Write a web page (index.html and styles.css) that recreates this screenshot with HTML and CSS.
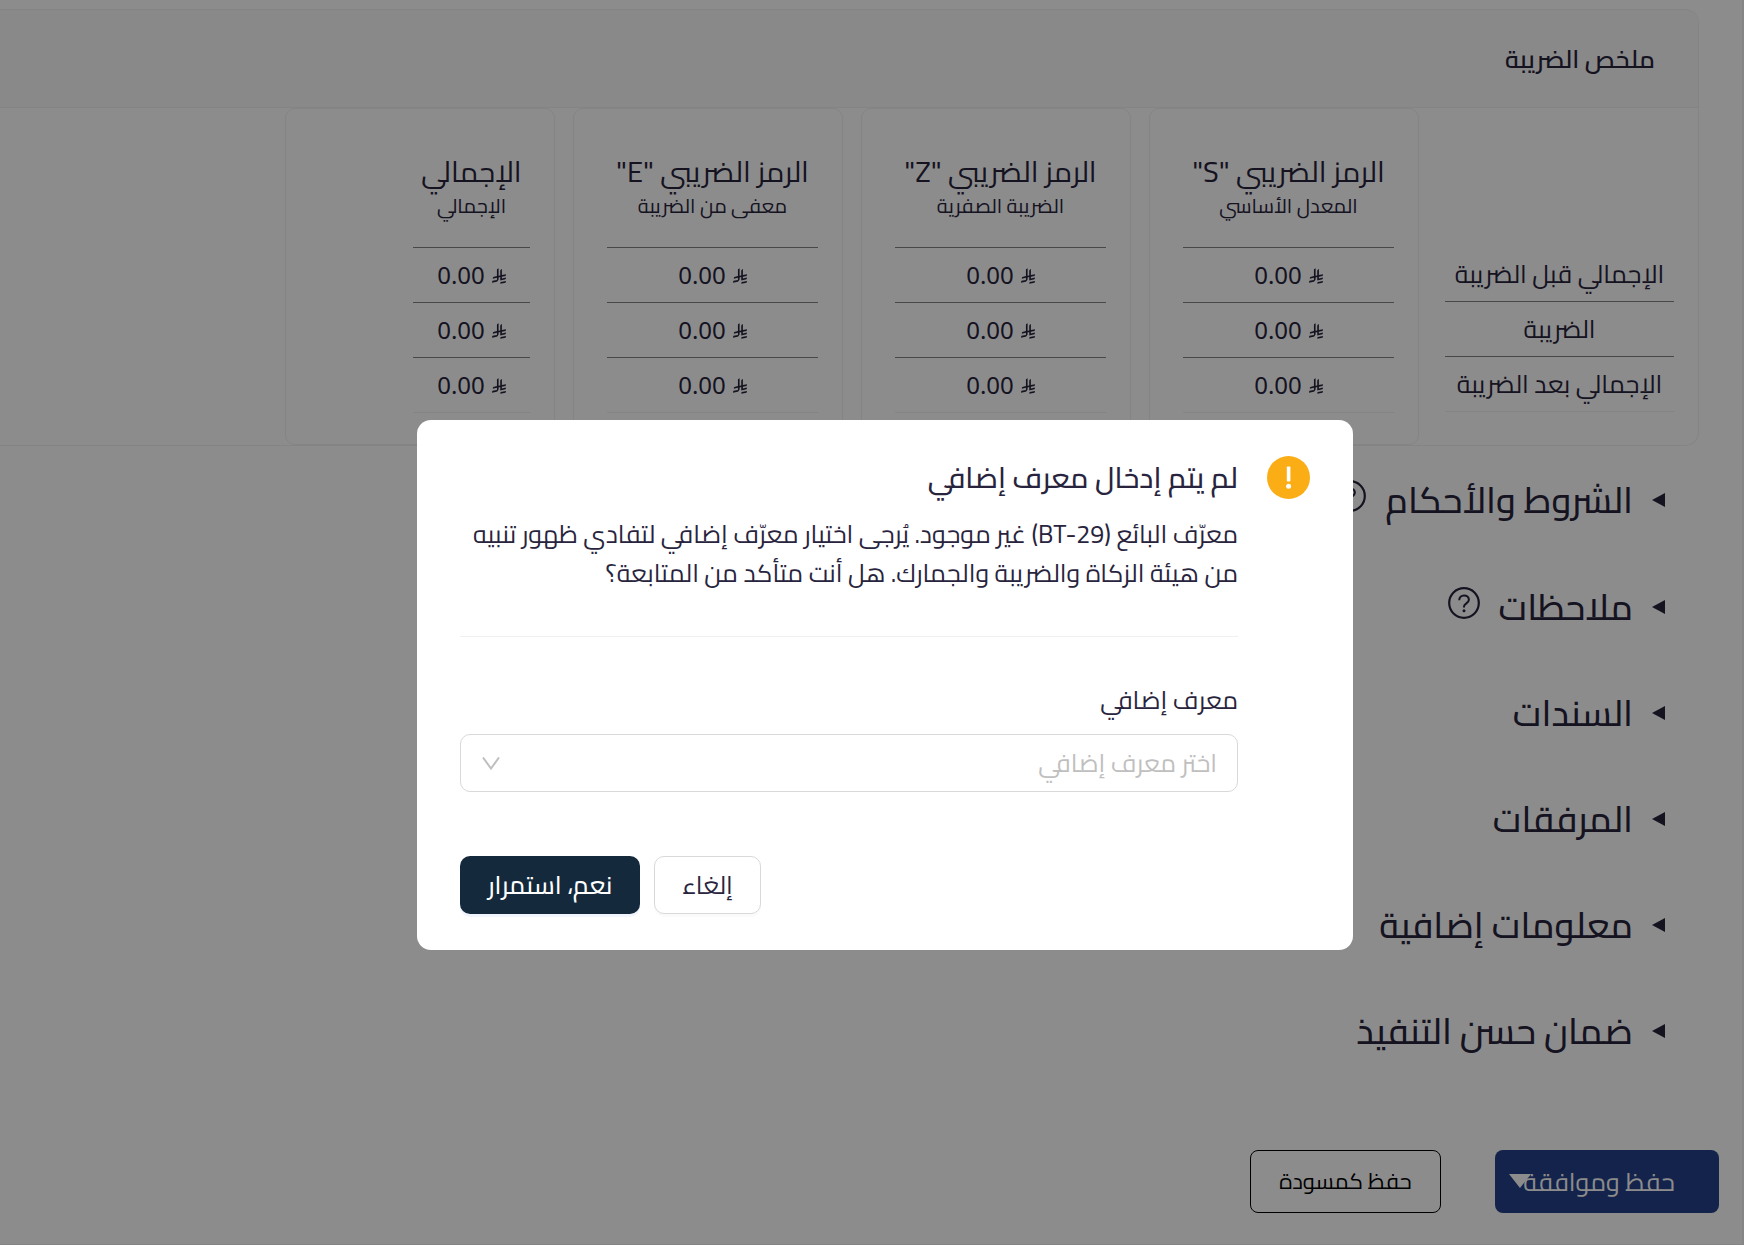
FILE: index.html
```html
<!DOCTYPE html>
<html lang="ar" dir="rtl">
<head>
<meta charset="utf-8">
<title>ملخص الضريبة</title>
<link rel="stylesheet" href="styles.css">
</head>
<body>
<svg class="sprite" aria-hidden="true">
  <symbol id="riyal" viewBox="0 0 1124 1256">
    <path d="M699.62 1113.02c-20.06 44.48-33.32 92.75-38.4 143.37l424.51-90.24c20.06-44.47 33.31-92.75 38.4-143.37l-424.51 90.24Z"/>
    <path d="M1085.73 895.8c20.06-44.47 33.32-92.75 38.4-143.37l-330.68 70.33v-135.2l292.27-62.11c20.06-44.47 33.32-92.75 38.4-143.37l-330.68 70.27V66.13c-50.67 28.45-95.67 66.32-132.25 110.99v403.35l-132.25 28.11V0c-50.67 28.44-95.67 66.32-132.25 110.99v525.69l-295.91 62.88c-20.06 44.47-33.33 92.75-38.42 143.37l334.33-71.05v170.26l-358.3 76.14c-20.06 44.47-33.32 92.75-38.4 143.37l375.04-79.7c30.53-6.35 56.77-24.4 73.83-49.24l68.78-101.97c7.14-10.55 11.3-23.27 11.3-36.97v-149.98l132.25-28.11v270.4l424.53-90.28Z"/>
  </symbol>
  <symbol id="help" viewBox="0 0 32 32">
    <circle cx="16" cy="16" r="14.8" fill="none" stroke="currentColor" stroke-width="2.2"/>
    <path d="M11.2 13.2c0-3 2.1-4.8 4.8-4.8s4.9 1.8 4.9 4.4c0 3.6-4.9 3.5-4.9 6.8v.8" fill="none" stroke="currentColor" stroke-width="2"/>
    <circle cx="16" cy="23.8" r="1.5"/>
  </symbol>
</svg>

<main class="page">
  <section class="panel">
    <h2 class="panel-title">ملخص الضريبة</h2>
    <div class="columns">
      <div class="column labels">
        <table class="rows">
          <tbody>
            <tr><th scope="row">الإجمالي قبل الضريبة</th></tr>
            <tr><th scope="row">الضريبة</th></tr>
            <tr><th scope="row">الإجمالي بعد الضريبة</th></tr>
          </tbody>
        </table>
      </div>
      <div class="column card">
        <table class="rows">
          <thead><tr><th scope="col"><span class="code">الرمز الضريبي "S"</span><span class="note">المعدل الأساسي</span></th></tr></thead>
          <tbody>
            <tr><td><svg class="riyal"><use href="#riyal"/></svg>0.00</td></tr>
            <tr><td><svg class="riyal"><use href="#riyal"/></svg>0.00</td></tr>
            <tr><td><svg class="riyal"><use href="#riyal"/></svg>0.00</td></tr>
          </tbody>
        </table>
      </div>
      <div class="column card">
        <table class="rows">
          <thead><tr><th scope="col"><span class="code">الرمز الضريبي "Z"</span><span class="note">الضريبة الصفرية</span></th></tr></thead>
          <tbody>
            <tr><td><svg class="riyal"><use href="#riyal"/></svg>0.00</td></tr>
            <tr><td><svg class="riyal"><use href="#riyal"/></svg>0.00</td></tr>
            <tr><td><svg class="riyal"><use href="#riyal"/></svg>0.00</td></tr>
          </tbody>
        </table>
      </div>
      <div class="column card">
        <table class="rows">
          <thead><tr><th scope="col"><span class="code">الرمز الضريبي "E"</span><span class="note">معفى من الضريبة</span></th></tr></thead>
          <tbody>
            <tr><td><svg class="riyal"><use href="#riyal"/></svg>0.00</td></tr>
            <tr><td><svg class="riyal"><use href="#riyal"/></svg>0.00</td></tr>
            <tr><td><svg class="riyal"><use href="#riyal"/></svg>0.00</td></tr>
          </tbody>
        </table>
      </div>
      <div class="column card total">
        <table class="rows">
          <thead><tr><th scope="col"><span class="code">الإجمالي</span><span class="note">الإجمالي</span></th></tr></thead>
          <tbody>
            <tr><td><svg class="riyal"><use href="#riyal"/></svg>0.00</td></tr>
            <tr><td><svg class="riyal"><use href="#riyal"/></svg>0.00</td></tr>
            <tr><td><svg class="riyal"><use href="#riyal"/></svg>0.00</td></tr>
          </tbody>
        </table>
      </div>
    </div>
  </section>

  <div class="sections">
    <details><summary class="with-help"><i class="marker"></i>الشروط والأحكام<svg class="help"><use href="#help"/></svg></summary></details>
    <details><summary class="with-help"><i class="marker"></i>ملاحظات<svg class="help"><use href="#help"/></svg></summary></details>
    <details><summary><i class="marker"></i>السندات</summary></details>
    <details><summary><i class="marker"></i>المرفقات</summary></details>
    <details><summary><i class="marker"></i>معلومات إضافية</summary></details>
    <details><summary><i class="marker"></i>ضمان حسن التنفيذ</summary></details>
  </div>

  <div class="actions">
    <button class="save" type="button"><i class="caret"></i><span>حفظ وموافقة</span></button>
    <button class="draft" type="button">حفظ كمسودة</button>
  </div>
</main>

<div class="overlay">
  <div class="modal" role="dialog" aria-modal="true" aria-labelledby="modal-title">
    <svg class="warning" viewBox="0 0 43 43" aria-hidden="true">
      <circle cx="21.5" cy="21.5" r="21.5" fill="#faad14"/>
      <rect x="19.8" y="10.5" width="3.6" height="15" rx=".8" fill="#fff"/>
      <circle cx="21.6" cy="30.2" r="2.5" fill="#fff"/>
    </svg>
    <div class="modal-body">
      <h3 class="modal-title" id="modal-title">لم يتم إدخال معرف إضافي</h3>
      <p class="modal-text">معرّف البائع (BT-29) غير موجود. يُرجى اختيار معرّف إضافي لتفادي ظهور تنبيه<br>من هيئة الزكاة والضريبة والجمارك. هل أنت متأكد من المتابعة؟</p>
      <hr class="divider">
      <label class="field-label" for="extra-id">معرف إضافي</label>
      <div class="select-box">
        <select id="extra-id"><option>اختر معرف إضافي</option></select>
        <svg class="chevron" viewBox="0 0 18 13" aria-hidden="true"><path d="M1 .5 9 11.5 17 .5" fill="none" stroke="currentColor" stroke-width="2"/></svg>
      </div>
      <div class="modal-actions">
        <button class="cancel" type="button">إلغاء</button>
        <button class="confirm" type="button">نعم، استمرار</button>
      </div>
    </div>
  </div>
</div>
</body>
</html>
```
FILE: styles.css
```css
* {
  box-sizing: border-box;
}

body {
  margin: 0;
  background: #f5f5f5;
  color: #28243d;
  font-family: Cairo, "Noto Sans", "DejaVu Sans", sans-serif;
  font-size: 25px;
  overflow: hidden;
}

button,
select {
  font: inherit;
  color: inherit;
  cursor: pointer;
}

h2,
h3,
p {
  margin: 0;
  font-weight: 400;
}

.sprite {
  position: absolute;
  width: 0;
  height: 0;
}

.page {
  margin-right: 2px;
  padding-top: 9px;
  background: #fff;
  border-bottom: 1px solid #f0f0f0;
}

/* Tax summary */
.panel {
  margin-right: 43px;
  border: 1px solid #f0f0f0;
  border-left: 0;
  border-radius: 0 14px 14px 0;
}

.panel-title {
  padding: 28px 43px 27px;
  background: #fafafa;
  border-bottom: 1px solid #f0f0f0;
  border-top-right-radius: 14px;
  font-size: 25px;
  font-weight: 600;
  line-height: 42px;
}

.columns {
  display: flex;
  gap: 18px;
}

.column {
  display: flex;
  flex: 0 0 270px;
  align-items: flex-end;
  padding: 26px 24px 31px;
}

.labels {
  flex-basis: 261px;
  padding: 26px 24px 33px 8px;
}

.card {
  border: 1px solid #f0f0f0;
  border-radius: 10px;
}

.rows {
  width: 211px;
  border-spacing: 0;
  line-height: 36px;
  text-align: center;
  white-space: nowrap;
}

.labels .rows {
  width: 100%;
}

.total .rows {
  width: 117px;
}

.rows th,
.rows td {
  height: 55px;
  padding: 0;
  border-bottom: 1px solid #838383;
  font-weight: 400;
}

.rows td {
  font-family: "Noto Sans", sans-serif;
  font-size: 24px;
}

.rows tbody tr:last-child > * {
  border-bottom-color: #f0f0f0;
}

.rows thead th {
  height: 113px;
  padding-bottom: 26px;
  vertical-align: bottom;
}

.code {
  display: block;
  font-size: 29px;
  line-height: 38px;
}

.note {
  display: block;
  font-size: 20px;
  line-height: 30px;
}

.riyal {
  width: 14px;
  height: 16px;
  margin-left: 7px;
  fill: currentColor;
}

/* Collapsible sections */
.sections summary {
  display: flex;
  align-items: center;
  height: 106px;
  padding-right: 77px;
  font-size: 36px;
  font-weight: 500;
  list-style: none;
  cursor: pointer;
}

.sections .with-help {
  height: 107px;
}

.marker {
  margin-left: 19px;
  border: 7px solid transparent;
  border-right: 13px solid #28243d;
  border-left: 0;
}

.help {
  width: 32px;
  height: 32px;
  margin-right: 19px;
  margin-bottom: 8px;
  fill: currentColor;
}

/* Page buttons */
.actions {
  display: flex;
  gap: 54px;
  padding: 66px 23px 31px;
}

.save,
.draft {
  height: 63px;
  border-radius: 8px;
}

.save {
  position: relative;
  width: 224px;
  padding: 0 44px;
  border: 0;
  background: #24418a;
  color: #fff;
  text-align: right;
  white-space: nowrap;
}

.caret {
  position: absolute;
  top: 24px;
  left: 14px;
  border: 11px solid transparent;
  border-top: 14px solid #fff;
  border-bottom: 0;
}

.draft {
  width: 191px;
  padding-bottom: 3px;
  border: 1px solid #000;
  background: #fff;
  color: #000;
  font-size: 22px;
}

/* Confirmation dialog */
.overlay {
  position: fixed;
  inset: 0;
  display: flex;
  align-items: flex-start;
  justify-content: center;
  padding: 420px 0 0 26px;
  background: rgba(0, 0, 0, 0.45);
}

.modal {
  display: flex;
  gap: 29px;
  width: 936px;
  padding: 36px 43px;
  border-radius: 14px;
  background: #fff;
}

.warning {
  flex: none;
  width: 43px;
  height: 43px;
}

.modal-body {
  flex: 1;
}

.modal-title {
  font-size: 29px;
  font-weight: 500;
  line-height: 43px;
}

.modal-text {
  margin-top: 15px;
  line-height: 39px;
  white-space: nowrap;
}

.divider {
  height: 1px;
  margin: 44px 0 43px;
  border: 0;
  background: #f0f0f0;
}

.field-label {
  display: block;
  margin-bottom: 15px;
  line-height: 39px;
}

.select-box {
  display: grid;
  align-items: center;
}

.select-box > * {
  grid-area: 1 / 1;
}

.select-box select {
  width: 100%;
  height: 58px;
  padding: 0 20px 2px;
  border: 1px solid #d9d9d9;
  border-radius: 10px;
  background: #fff;
  color: #bfbfbf;
  appearance: none;
}

.chevron {
  justify-self: end;
  width: 18px;
  height: 13px;
  margin-left: 22px;
  color: #bfbfbf;
  pointer-events: none;
}

.modal-actions {
  display: flex;
  justify-content: flex-end;
  gap: 14px;
  margin-top: 64px;
}

.cancel,
.confirm {
  height: 58px;
  padding-bottom: 3px;
  border-radius: 10px;
  white-space: nowrap;
}

.cancel {
  width: 107px;
  border: 1px solid #d9d9d9;
  background: #fff;
  box-shadow: 0 3px 0 rgba(0, 0, 0, 0.02);
}

.confirm {
  width: 180px;
  border: 0;
  background: #15293d;
  color: #fff;
  font-weight: 500;
  box-shadow: 0 3px 0 rgba(5, 80, 255, 0.06);
}
```
